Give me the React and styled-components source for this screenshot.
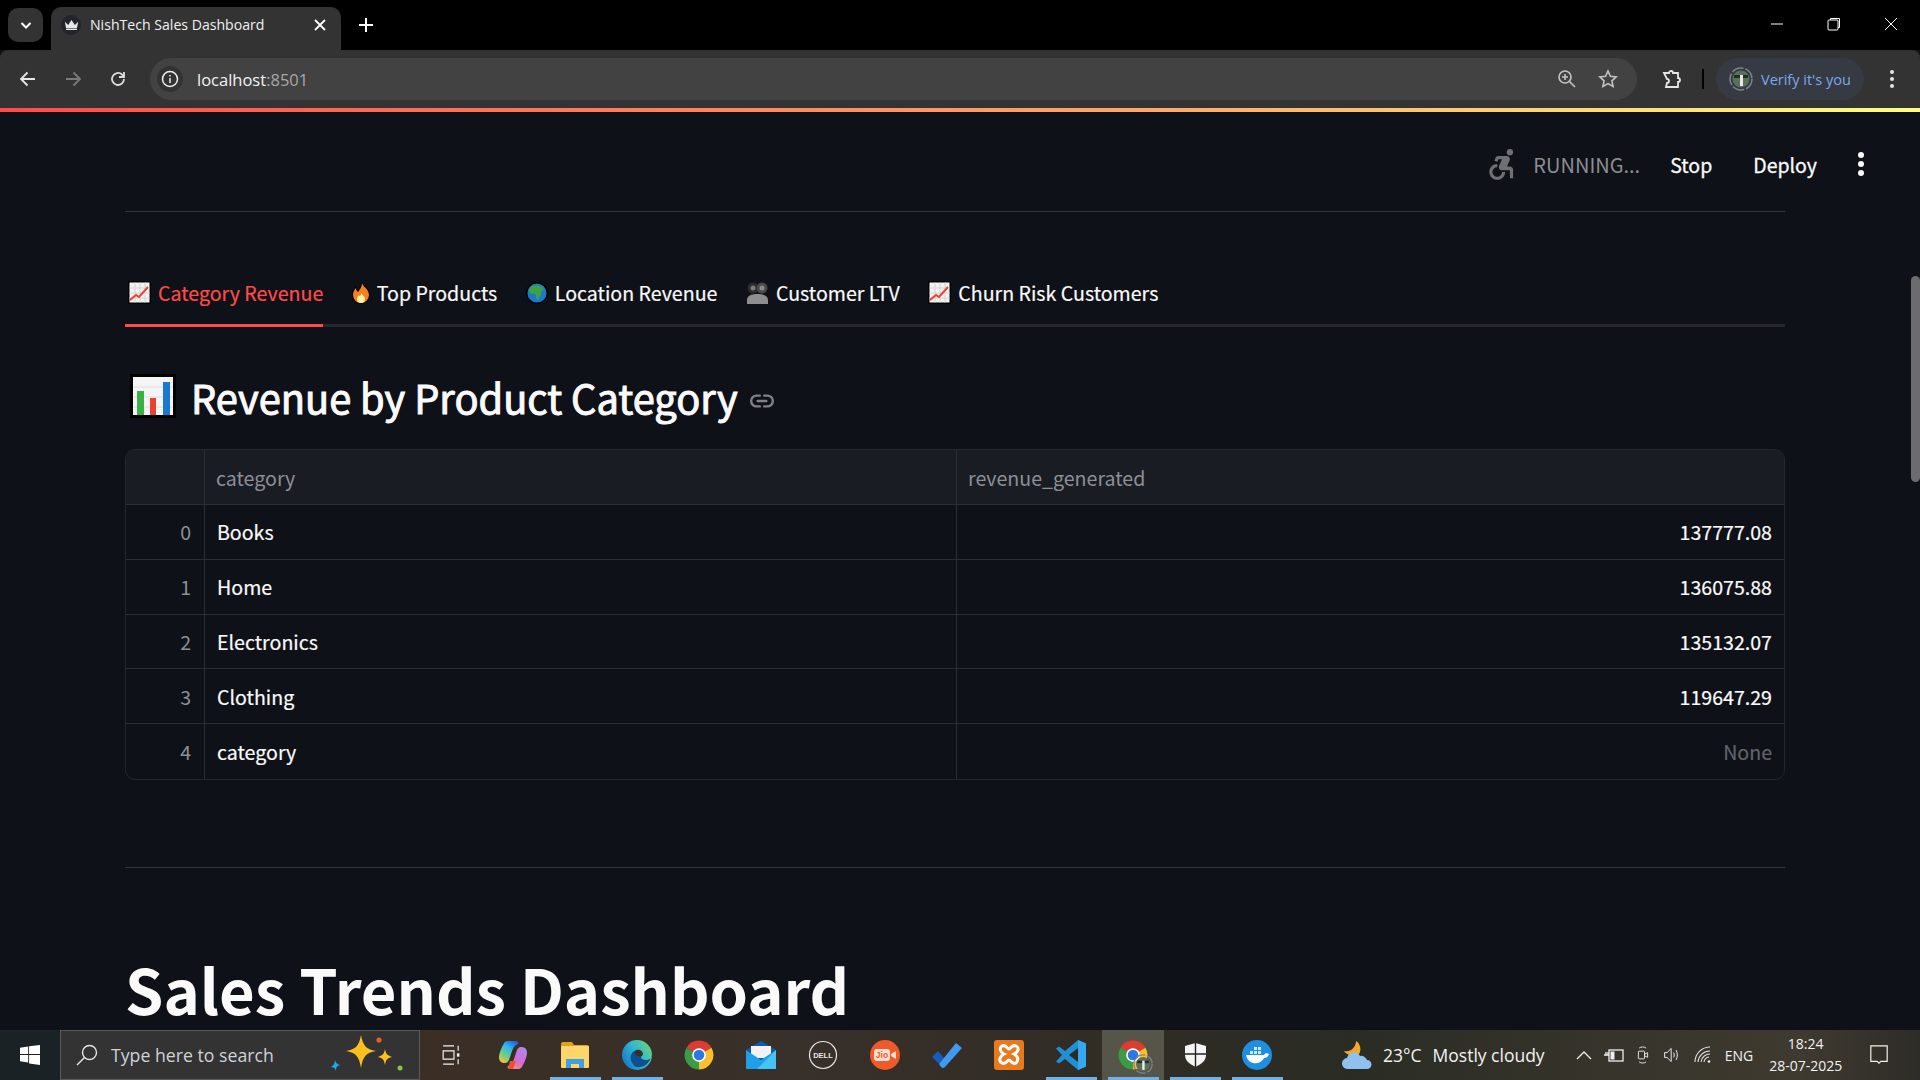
import React from 'react'
import styled, { createGlobalStyle } from 'styled-components'
import { MdAccessibleForward } from 'react-icons/md'

const SOURCE = `"Noto Sans CJK JP", "Noto Sans", sans-serif`
const SEGOE = `"Open Sans", "Noto Sans", sans-serif`

const GlobalStyle = createGlobalStyle`
  html, body { margin: 0; padding: 0; background: #0e1117; }
  * { box-sizing: border-box; }
`

const rows = [
  { id: 0, category: 'Books', revenue: '137777.08' },
  { id: 1, category: 'Home', revenue: '136075.88' },
  { id: 2, category: 'Electronics', revenue: '135132.07' },
  { id: 3, category: 'Clothing', revenue: '119647.29' },
  { id: 4, category: 'category', revenue: 'None', muted: true },
]

const ChartUp = () => (
  <svg width="23" height="23" viewBox="0 0 23 23">
    <rect width="23" height="23" fill="#000" />
    <rect x="1.500" y="1.500" width="20" height="20" fill="#f2f2f2" />
    <path d="M1.500 7h20M1.500 12h20M1.500 17h20M7 1.500v20M12 1.500v20M17 1.500v20" stroke="#d4d4d4" strokeWidth="1" />
    <path d="M2 19l6-5 3 2 9-10" fill="none" stroke="#e8432e" strokeWidth="2" />
  </svg>
)

const Flame = () => (
  <svg width="18" height="23" viewBox="0 0 18 23">
    <path d="M10 0c1 4 8 6 8 14a9 9 0 0 1-18 0c0-4 2-7 4-9 0 2 1 3 2 4 2-3 4-5 4-9z" fill="#000" />
    <path d="M10 2c1 4 7 6 7 12a8 8 0 0 1-16 0c0-3 1-5 3-7 0 2 1 3 2 4 2-3 4-5 4-9z" fill="#f6801f" />
    <path d="M9 12c1 2 4 3 4 6a4 4 0 0 1-8 0c0-2 1-3 2-4 0 1 1 1 1 1 1-1 1-2 1-3z" fill="#fdf0a0" />
  </svg>
)

const Globe = () => (
  <svg width="22" height="22" viewBox="0 0 22 22">
    <circle cx="11" cy="11" r="10.300" fill="#1a78d2" stroke="#000" strokeWidth="1.400" />
    <path d="M6 4c3-1 5-1 7 0 1 0 2 1 4 1l1 3c-2 0-3 1-3 3 0 3-2 4-3 7-1 0-2-1-2-3 0-2 0-3-2-3-3 0-5-1-5-3 0-3 2-4 3-5z" fill="#3fa144" />
  </svg>
)

const People = () => (
  <svg width="23" height="22" viewBox="0 0 23 22">
    <circle cx="7" cy="6" r="5.500" fill="#2c2c2c" />
    <circle cx="16" cy="6" r="5.500" fill="#4a4a4a" />
    <circle cx="7" cy="6" r="2.500" fill="#7c7c7c" />
    <circle cx="16" cy="6" r="2.500" fill="#8a8a8a" />
    <path d="M1 22v-4c0-4 4-6 10.500-6S22 14 22 18v4z" fill="#8e8e8e" />
  </svg>
)

const BarChart = () => (
  <svg width="46" height="44" viewBox="0 0 46 44">
    <rect width="46" height="44" fill="#000" />
    <rect x="3" y="3" width="40" height="38" fill="#f5f5f5" />
    <path d="M3 13h40M3 23h40M3 33h40" stroke="#dedede" strokeWidth="1" />
    <rect x="7" y="17" width="7" height="24" fill="#3cb043" />
    <rect x="20" y="24" width="6" height="17" fill="#e8432e" />
    <rect x="33" y="8" width="7" height="33" fill="#1a78d2" />
  </svg>
)

const LinkIcon = () => (
  <svg width="26" height="26" viewBox="0 0 24 24" fill="none" stroke="#7f8186" strokeWidth="2.2" strokeLinecap="round">
    <path d="M10 7H7a5 5 0 0 0 0 10h3M14 7h3a5 5 0 0 1 0 10h-3M8 12h8" />
  </svg>
)

const Crown = () => (
  <svg width="15" height="12" viewBox="0 0 18 14">
    <path d="M1 3l4 4 4-6 4 6 4-4-1.500 8h-13z" fill="#e8e8e8" />
    <rect x="2.500" y="11.500" width="13" height="1.500" fill="#e8e8e8" />
  </svg>
)

const Avatar = ({ size = 24 }) => (
  <svg width={size} height={size} viewBox="0 0 24 24">
    <circle cx="12" cy="12" r="11" fill="none" stroke="#80838a" strokeWidth="1.500" strokeDasharray="12 2" />
    <circle cx="12" cy="12" r="8.500" fill="#5d6e5c" />
    <path d="M5 8h14v3H5z" fill="#20301f" />
    <path d="M11 8h3v11h-3z" fill="#e8e8e8" />
  </svg>
)

const ChromeLogo = ({ size = 30 }) => (
  <svg width={size} height={size} viewBox="0 0 48 48">
    <path d="M24 24L4.080 12.500A23 23 0 0 1 43.920 12.500z" fill="#dd3c30" />
    <path d="M24 24L24 47A23 23 0 0 1 4.080 12.500z" fill="#3c9b47" />
    <path d="M24 24L43.920 12.500A23 23 0 0 1 24 47z" fill="#f7c02c" />
    <circle cx="24" cy="24" r="11" fill="#fff" />
    <circle cx="24" cy="24" r="8.500" fill="#2b78e4" />
  </svg>
)

const Copilot = () => (
  <svg width="30" height="30" viewBox="0 0 30 30">
    <defs>
      <linearGradient id="copA" x1="0.800" y1="0" x2="0.200" y2="1">
        <stop offset="0" stopColor="#1f62d8" />
        <stop offset="0.350" stopColor="#2fb5f0" />
        <stop offset="0.700" stopColor="#6fd080" />
        <stop offset="1" stopColor="#f5c242" />
      </linearGradient>
      <linearGradient id="copB" x1="0.800" y1="0" x2="0.200" y2="1">
        <stop offset="0" stopColor="#a98af0" />
        <stop offset="0.600" stopColor="#d86ad0" />
        <stop offset="1" stopColor="#f59a5a" />
      </linearGradient>
    </defs>
    <path d="M10 1h8c2 0 3 2 2 3-3 1-5 4-6 7l-3 9c-1 2-2 3-4 3-4 0-6-2-6-6s4-13 6-15c1-1 2-1 3-1z" fill="url(#copA)" />
    <path d="M20 29h-8c-2 0-3-2-2-3 3-1 5-4 6-7l3-9c1-2 2-3 4-3 4 0 6 2 6 6s-4 13-6 15c-1 1-2 1-3 1z" fill="url(#copB)" />
    <path d="M12 21h6l-3 8h-3c-2 0-2-2-1-4z" fill="#e8503a" />
  </svg>
)

const Explorer = () => (
  <svg width="28" height="26" viewBox="0 0 28 26">
    <path d="M0 2a2 2 0 0 1 2-2h9l2 3h13a2 2 0 0 1 2 2v3H0z" fill="#e0a11f" />
    <rect y="4" width="28" height="22" rx="1" fill="#fcd66a" />
    <path d="M5 26v-9h18v9h-5v-4h-8v4z" fill="#3f9fe0" />
  </svg>
)

const Edge = () => (
  <svg width="30" height="30" viewBox="0 0 30 30">
    <defs>
      <linearGradient id="edgeA" x1="0" y1="0.800" x2="1" y2="0.200">
        <stop offset="0" stopColor="#1673c4" />
        <stop offset="0.500" stopColor="#2fb4d6" />
        <stop offset="1" stopColor="#66d878" />
      </linearGradient>
    </defs>
    <circle cx="15" cy="15" r="15" fill="url(#edgeA)" />
    <path d="M30 15c0 3-3 5-6 5-3 0-5-1-5-3 1-1 1-3 0-4-2-3-7-3-9 0-3 4-1 11 4 14 7 1 13-2 16-12z" fill="#0f4f8f" />
    <path d="M14 10c4-1 7 1 7 4 0 2-3 3-5 2-3-1-5-4-2-6z" fill="#38302a" />
  </svg>
)

const Mail = () => (
  <svg width="30" height="28" viewBox="0 0 30 28">
    <path d="M0 9L15 0l15 9-15 10z" fill="#0b5cad" />
    <path d="M5 5h20v12H5z" fill="#f2f2f2" />
    <path d="M0 9l15 10L30 9v19H0z" fill="#1f9fe8" />
    <path d="M30 9v19H11z" fill="#43c4f5" />
  </svg>
)

const Dell = () => (
  <svg width="30" height="30" viewBox="0 0 30 30">
    <circle cx="15" cy="15" r="13.500" fill="none" stroke="#e6e6e6" strokeWidth="1.200" />
    <DellText x="15" y="18">DELL</DellText>
  </svg>
)

const Jio = () => (
  <svg width="30" height="30" viewBox="0 0 30 30">
    <circle cx="15" cy="15" r="15" fill="#f05a28" />
    <rect x="4" y="9" width="16" height="12" rx="3" fill="#fbe0d6" />
    <path d="M21 14l5-3v8l-5-3z" fill="#fbe0d6" />
    <JioText x="12" y="18">Jio</JioText>
  </svg>
)

const TodoCheck = () => (
  <svg width="30" height="26" viewBox="0 0 30 26">
    <path d="M0 15l6-6 6 7-5 6z" fill="#195abd" />
    <path d="M7 22L24 1l6 5-17 19a3 3 0 0 1-4 0z" fill="#3f9bef" />
  </svg>
)

const Xampp = () => (
  <svg width="30" height="30" viewBox="0 0 30 30">
    <rect width="30" height="30" rx="3" fill="#e87a1e" />
    <path d="M8 6c4-2 5 3 7 3s3-5 7-3 2 6-2 8c4 2 5 6 2 9-4 2-5-3-7-3s-3 5-7 3-2-7 2-9c-4-2-5-6-2-8z" fill="none" stroke="#fff" strokeWidth="3" />
  </svg>
)

const VsCode = () => (
  <svg width="30" height="30" viewBox="0 0 30 30">
    <path d="M22 0l8 3.500v23L22 30 9 19l-6 4.500-3-2 6-6.500-6-6.500 3-2L9 11z" fill="#1f8fd6" />
    <path d="M22 8l-9 7 9 7z" fill="#2b2a24" />
    <path d="M22 0l8 3.500v23L22 30z" fill="#35a8ee" />
  </svg>
)

const Shield = () => (
  <svg width="21" height="24" viewBox="0 0 21 24">
    <path d="M10.500 0L21 3v9c0 6-5 9-10.500 12C5 21 0 18 0 12V3z" fill="#f5f5f5" />
    <path d="M10.500 0v24M0 11h21" stroke="#222" strokeWidth="1.400" />
  </svg>
)

const Docker = () => (
  <svg width="30" height="30" viewBox="0 0 30 30">
    <circle cx="15" cy="15" r="15" fill="#1d8fe3" />
    <path d="M4 15h18c1-2 3-2 5-1-1 3-3 4-5 4-2 4-6 6-11 5-4-1-6-4-7-8z" fill="#fff" />
    <path d="M8 11h3v3H8zM12 11h3v3h-3zM16 11h3v3h-3zM12 7h3v3h-3zM16 7h3v3h-3z" fill="#cfe8fb" />
  </svg>
)

const Sparkles = () => (
  <svg width="78" height="42" viewBox="0 0 78 42">
    <path d="M32 1c2 11 5 14 15 16-10 2-13 5-15 17-2-12-5-15-15-17 10-2 13-5 15-16z" fill="#fbbf1f" />
    <path d="M56 15c1 5 2 6 7 8-5 1-6 3-7 8-1-5-2-7-7-8 5-2 6-3 7-8z" fill="#fbbf1f" />
    <circle cx="50" cy="6" r="2.600" fill="#e8601e" />
    <circle cx="71" cy="34" r="2.500" fill="#8cc63f" />
    <path d="M6 26c1 3 2 4 5 5-3 1-4 2-4 6-1-3-2-4-5-4 3-2 4-4 4-7z" fill="#1ea7ef" />
  </svg>
)

const WeatherIcon = () => (
  <svg width="30" height="28" viewBox="0 0 30 28">
    <path d="M14 0a10 10 0 0 1-12 10c2 4 10 6 15 3 3-4 1-11-3-13z" fill="#f3a82a" />
    <path d="M6 28a5.500 5.500 0 0 1-1-11 7 7 0 0 1 13-2 6 6 0 0 1 7 4 4.500 4.500 0 0 1 0 9z" fill="#8fc0ee" />
  </svg>
)

const ActiveChrome = () => (
  <ChromeStack>
    <ChromeLogo />
    <Badge><Avatar size={20} /></Badge>
  </ChromeStack>
)

const taskApps = [
  { name: 'copilot', Icon: Copilot },
  { name: 'explorer', Icon: Explorer, open: true },
  { name: 'edge', Icon: Edge, open: true },
  { name: 'chrome', Icon: ChromeLogo },
  { name: 'mail', Icon: Mail },
  { name: 'dell', Icon: Dell },
  { name: 'jio', Icon: Jio },
  { name: 'todo', Icon: TodoCheck },
  { name: 'xampp', Icon: Xampp },
  { name: 'vscode', Icon: VsCode, open: true },
  { name: 'chrome-active', Icon: ActiveChrome, open: true, active: true },
  { name: 'shield', Icon: Shield, open: true },
  { name: 'docker', Icon: Docker, open: true },
]

export default function App() {
  return (
    <Page>
      <GlobalStyle />

      <TabStrip>
        <TabSearch>
          <svg width="14" height="14" viewBox="0 0 14 14" fill="none" stroke="#fff" strokeWidth="2"><path d="M2.500 5L7 9.500 11.500 5" /></svg>
        </TabSearch>
        <BrowserTab>
          <Favicon><Crown /></Favicon>
          <TabTitle>NishTech Sales Dashboard</TabTitle>
          <svg width="14" height="14" viewBox="0 0 14 14" stroke="#fff" strokeWidth="1.800"><path d="M2 2l10 10M12 2L2 12" /></svg>
        </BrowserTab>
        <NewTab>
          <svg width="16" height="16" viewBox="0 0 16 16" stroke="#fff" strokeWidth="2"><path d="M8 1v14M1 8h14" /></svg>
        </NewTab>
        <WindowControls>
          <WindowButton>
            <svg width="14" height="14" viewBox="0 0 14 14" stroke="#fff" strokeWidth="1"><path d="M1 7h12" /></svg>
          </WindowButton>
          <WindowButton>
            <svg width="14" height="14" viewBox="0 0 14 14" fill="none" stroke="#fff" strokeWidth="1"><rect x="1" y="3" width="10" height="10" rx="1" /><path d="M3.500 3V1.500h9v9H11" /></svg>
          </WindowButton>
          <WindowButton>
            <svg width="14" height="14" viewBox="0 0 14 14" stroke="#fff" strokeWidth="1"><path d="M1 1l12 12M13 1L1 13" /></svg>
          </WindowButton>
        </WindowControls>
      </TabStrip>

      <Toolbar>
        <NavIcon>
          <svg width="18" height="18" viewBox="0 0 18 18" fill="none" stroke="#e6e6e6" strokeWidth="1.800"><path d="M16 9H2M8.500 2.500L2 9l6.500 6.500" /></svg>
        </NavIcon>
        <NavIcon>
          <svg width="18" height="18" viewBox="0 0 18 18" fill="none" stroke="#7a7a7a" strokeWidth="1.800"><path d="M2 9h14M9.500 2.500L16 9l-6.500 6.500" /></svg>
        </NavIcon>
        <NavIcon>
          <svg width="18" height="18" viewBox="0 0 18 18" fill="none" stroke="#dcdcdc" strokeWidth="1.800"><path d="M15 9a6 6 0 1 1-2-4.500L15 6.500" /><path d="M15 2v5h-5" /></svg>
        </NavIcon>
        <Omnibox>
          <SiteInfo>
            <svg width="18" height="18" viewBox="0 0 18 18" fill="none" stroke="#f0f0f0" strokeWidth="1.500"><circle cx="9" cy="9" r="7.500" /><path d="M9 8v5M9 5v1.500" /></svg>
          </SiteInfo>
          <UrlText>localhost<UrlPort>:8501</UrlPort></UrlText>
          <OmniActions>
            <svg width="20" height="20" viewBox="0 0 20 20" fill="none" stroke="#c4c4c4" strokeWidth="1.600"><circle cx="8" cy="8" r="6" /><path d="M12.500 12.500L18 18M5 8h6M8 5v6" /></svg>
            <svg width="20" height="20" viewBox="0 0 20 20" fill="none" stroke="#c4c4c4" strokeWidth="1.600"><path d="M10 2l2.400 5.300 5.800.6-4.300 3.900 1.200 5.700L10 14.600l-5.100 2.900 1.200-5.700L1.800 7.900l5.800-.6z" /></svg>
          </OmniActions>
        </Omnibox>
        <ExtensionSlot>
          <svg width="22" height="22" viewBox="0 0 22 22" fill="none" stroke="#e6e6e6" strokeWidth="1.800"><path d="M3 5h5a2 2 0 1 1 4 0h5v5a2 2 0 1 1 0 4v5H5l1-4a2 2 0 1 0 0-4z" /></svg>
        </ExtensionSlot>
        <ToolbarDivider />
        <VerifyPill>
          <Avatar />
          Verify it's you
        </VerifyPill>
        <MenuDots $size={4} $gap={3} $color="#e6e6e6" $left={26} />
      </Toolbar>

      <LoadBar />

      <Main>
        <StatusBar>
          <MdAccessibleForward size={38} color="#6e7074" />
          <RunningText>RUNNING...</RunningText>
          <StatusAction>Stop</StatusAction>
          <StatusAction>Deploy</StatusAction>
          <MenuDots $size={6} $gap={3} $color="#fafafa" $left={0} />
        </StatusBar>

        <Content>
          <Rule />
          <TabList>
            <AppTab $active><ChartUp />Category Revenue</AppTab>
            <AppTab><Flame />Top Products</AppTab>
            <AppTab><Globe />Location Revenue</AppTab>
            <AppTab><People />Customer LTV</AppTab>
            <AppTab><ChartUp />Churn Risk Customers</AppTab>
          </TabList>

          <SectionHeading>
            <BarChart />
            <HeadingText>Revenue by Product Category</HeadingText>
            <LinkIcon />
          </SectionHeading>

          <DataTable>
            <HeadCell />
            <HeadCell>category</HeadCell>
            <HeadCell $last>revenue_generated</HeadCell>
            {rows.map(row => (
              <React.Fragment key={row.id}>
                <IndexCell>{row.id}</IndexCell>
                <TextCell>{row.category}</TextCell>
                <ValueCell $muted={row.muted}>{row.revenue}</ValueCell>
              </React.Fragment>
            ))}
          </DataTable>

          <LowerRule />
          <PageTitle>Sales Trends Dashboard</PageTitle>
        </Content>

        <ScrollThumb />
      </Main>

      <Taskbar>
        <StartButton>
          <svg width="20" height="20" viewBox="0 0 22 22" fill="#fff"><path d="M0 3l9-1.300V10H0zM10 1.500L22 0v10H10zM0 11h9v8.300L0 18zM10 11h12v11l-12-1.700z" /></svg>
        </StartButton>
        <SearchBox>
          <svg width="24" height="24" viewBox="0 0 24 24" fill="none" stroke="#e6e6e6" strokeWidth="1.400"><circle cx="14.500" cy="9.500" r="7" /><path d="M9.500 14.500L2 22" /></svg>
          <SearchHint>Type here to search</SearchHint>
          <Sparkles />
        </SearchBox>
        <TaskView>
          <svg width="19" height="20" viewBox="0 0 22 24" fill="none" stroke="#f2f2f2" strokeWidth="1.400"><path d="M1 1h13M1 23h13M1 7h13v10H1zM19 1v6M19 17v6" /><rect x="17.500" y="10" width="3" height="4" fill="#f2f2f2" stroke="none" /></svg>
        </TaskView>
        {taskApps.map(({ name, Icon, open, active }) => (
          <TaskSlot key={name} $open={open} $active={active}><Icon /></TaskSlot>
        ))}
        <Tray>
          <WeatherIcon />
          <TrayLabel $left={11}>23°C</TrayLabel>
          <TrayLabel $left={11}>Mostly cloudy</TrayLabel>
          <TrayIcons>
            <svg width="16" height="10" viewBox="0 0 16 10" fill="none" stroke="#eee" strokeWidth="1.300"><path d="M1 9l7-7 7 7" /></svg>
            <svg width="20" height="14" viewBox="0 0 20 14" fill="none" stroke="#eee" strokeWidth="1.300"><rect x="5" y="2" width="14" height="11" /><rect x="6.500" y="3.500" width="4" height="8" fill="#eee" stroke="none" /><path d="M0 7h5M2 4v3M4 4v3" /></svg>
            <svg width="14" height="20" viewBox="0 0 14 26" fill="none" stroke="#eee" strokeWidth="1.200"><rect x="1" y="8" width="8" height="10" rx="1" /><path d="M9 12l4-2v6l-4-2M2 4c3-2 6-2 9 0M2 22c3 2 6 2 9 0" /></svg>
            <svg width="20" height="18" viewBox="0 0 20 22" fill="none" stroke="#eee" strokeWidth="1.200"><path d="M1 8h3l5-5v16l-5-5H1zM12 8c1 2 1 4 0 6M15 5c2 4 2 8 0 12" /></svg>
            <svg width="18" height="18" viewBox="0 0 18 18" fill="none" stroke="#ddd" strokeWidth="1.100"><path d="M1 16a15 15 0 0 1 15-15M4 16A12 12 0 0 1 16 5M7 16a9 9 0 0 1 9-8M10 16a6 6 0 0 1 5-5" /><circle cx="15" cy="15.500" r="1.300" fill="#eee" stroke="none" /></svg>
          </TrayIcons>
          <Lang>ENG</Lang>
          <Clock>
            <span>18:24</span>
            <span>28-07-2025</span>
          </Clock>
          <svg width="20" height="20" viewBox="0 0 20 22" fill="none" stroke="#f2f2f2" strokeWidth="1.300"><path d="M1 1h18v17h-7l-2 2-2-2H1z" /></svg>
        </Tray>
      </Taskbar>
    </Page>
  )
}

const Page = styled.div`
  width: 1920px;
  height: 1080px;
  display: flex;
  flex-direction: column;
  overflow: hidden;
  background: #0e1117;
`

const TabStrip = styled.div`
  height: 50px;
  flex: none;
  background: #000;
  display: flex;
  padding-left: 8px;
`

const TabSearch = styled.div`
  width: 35px;
  height: 34px;
  margin-top: 8px;
  border-radius: 10px;
  background: #333333;
  display: flex;
  align-items: center;
  justify-content: center;
`

const BrowserTab = styled.div`
  width: 290px;
  height: 43px;
  margin: 7px 0 0 8px;
  padding: 0 14px 8px 10px;
  background: #333333;
  border-radius: 10px 10px 0 0;
  display: flex;
  align-items: center;
`

const Favicon = styled.div`
  width: 20px;
  height: 20px;
  border-radius: 50%;
  background: #23252d;
  display: flex;
  align-items: center;
  justify-content: center;
`

const TabTitle = styled.div`
  flex: 1;
  margin-left: 9px;
  font: 400 14.1px ${SEGOE};
  color: #f0f0f0;
  white-space: nowrap;
`

const NewTab = styled.div`
  width: 36px;
  height: 34px;
  margin: 8px 0 0 7px;
  display: flex;
  align-items: center;
  justify-content: center;
`

const WindowControls = styled.div`
  margin-left: auto;
  display: flex;
  align-items: flex-start;
  padding-right: 1px;
`

const WindowButton = styled.div`
  width: 57px;
  height: 48px;
  display: flex;
  align-items: center;
  justify-content: center;
`

const Toolbar = styled.div`
  height: 58px;
  flex: none;
  background: #333333;
  border-radius: 8px 8px 0 0;
  display: flex;
  align-items: center;
  padding: 0 8px 0 5px;
`

const NavIcon = styled.div`
  width: 45px;
  display: flex;
  justify-content: center;
`

const Omnibox = styled.div`
  width: 1487px;
  height: 42px;
  margin-left: 10px;
  background: #424242;
  border-radius: 21px;
  display: flex;
  align-items: center;
  padding: 0 19px 0 7px;
`

const SiteInfo = styled.div`
  width: 26px;
  height: 26px;
  border-radius: 50%;
  background: #333333;
  display: flex;
  align-items: center;
  justify-content: center;
`

const UrlText = styled.div`
  margin-left: 14px;
  font: 400 16.5px ${SEGOE};
  color: #f2f2f2;
`

const UrlPort = styled.span`
  color: #a8a8a8;
`

const OmniActions = styled.div`
  margin-left: auto;
  display: flex;
  gap: 21px;
  align-items: center;
`

const ExtensionSlot = styled.div`
  width: 61px;
  display: flex;
  justify-content: center;
  margin-left: 4px;
`

const ToolbarDivider = styled.div`
  width: 2px;
  height: 20px;
  background: #000;
`

const VerifyPill = styled.div`
  width: 148px;
  height: 42px;
  margin-left: 12px;
  padding-left: 13px;
  border-radius: 21px;
  background: #363a43;
  color: #7ca9ec;
  font: 400 14.5px ${SEGOE};
  white-space: nowrap;
  display: flex;
  align-items: center;
  gap: 8px;
`

const MenuDots = styled.div`
  width: ${p => p.$size}px;
  height: ${p => p.$size}px;
  margin-left: ${p => p.$left}px;
  border-radius: 50%;
  background: ${p => p.$color};
  box-shadow: 0 ${p => p.$size + p.$gap}px 0 ${p => p.$color}, 0 -${p => p.$size + p.$gap}px 0 ${p => p.$color};
`

const LoadBar = styled.div`
  height: 4px;
  flex: none;
  background: linear-gradient(90deg, #ff4b4b, #ffa86a 60%, #fffd80);
`

const Main = styled.main`
  flex: 1;
  min-height: 0;
  position: relative;
  overflow: hidden;
`

const StatusBar = styled.div`
  height: 99px;
  display: flex;
  align-items: center;
  padding: 5px 56px 0 0;
  justify-content: flex-end;
  font-family: ${SOURCE};
`

const RunningText = styled.div`
  margin: 0 30px 0 12px;
  color: #8b8d92;
  font-size: 20px;
`

const StatusAction = styled.div`
  margin-right: 41px;
  color: #fafafa;
  font-size: 19.500px;
  -webkit-text-stroke: 0.3px #fafafa;
`

const Content = styled.div`
  padding: 0 135px 0 125px;
  font-family: ${SOURCE};
  color: #fafafa;
`

const Rule = styled.div`
  height: 1px;
  background: #35373d;
`

const TabList = styled.div`
  height: 115px;
  display: flex;
  align-items: flex-end;
  gap: 25.500px;
  border-bottom: 3px solid #26272e;
`

const AppTab = styled.div`
  height: 64px;
  margin-bottom: -3px;
  padding: 0 0 2px 3px;
  display: flex;
  align-items: center;
  gap: 7px;
  font-size: 19.600px;
  -webkit-text-stroke: 0.2px currentColor;
  color: ${p => (p.$active ? '#ff4b4b' : '#fafafa')};
  border-bottom: 3px solid ${p => (p.$active ? '#ff4b4b' : 'transparent')};
`

const SectionHeading = styled.h2`
  margin: 0;
  height: 122px;
  padding: 16px 0 0 5px;
  display: flex;
  align-items: center;
  font-size: 39.800px;
  font-weight: 400;
  -webkit-text-stroke: 1px #fafafa;
  & > svg:last-child { margin-top: 10px; }
`

const HeadingText = styled.span`
  margin: 0 11px 0 15px;
`

const DataTable = styled.div`
  display: grid;
  grid-template-columns: 79px 752px 1fr;
  grid-template-rows: 55px repeat(5, 54.800px);
  border: 1px solid #26272e;
  border-radius: 10px;
  overflow: hidden;
  font-size: 19.600px;
`

const cellBase = `
  display: flex;
  align-items: center;
  padding: 0 12px;
  border-bottom: 1px solid #2b2d34;
  border-right: 1px solid #2b2d34;
`

const HeadCell = styled.div`
  ${cellBase}
  padding-left: 11px;
  background: #1a1c24;
  color: #8c8f95;
  ${p => p.$last && 'border-right: 0;'}
`

const IndexCell = styled.div`
  ${cellBase}
  padding-right: 13px;
  justify-content: flex-end;
  color: #8c8f95;
  &:nth-last-child(3) { border-bottom: 0; }
`

const TextCell = styled.div`
  ${cellBase}
  -webkit-text-stroke: 0.2px #fafafa;
  &:nth-last-child(2) { border-bottom: 0; }
`

const ValueCell = styled.div`
  ${cellBase}
  border-right: 0;
  justify-content: flex-end;
  -webkit-text-stroke: 0.2px currentColor;
  color: ${p => (p.$muted ? '#62646b' : '#fafafa')};
  &:last-child { border-bottom: 0; }
`

const LowerRule = styled(Rule)`
  margin-top: 87px;
`

const PageTitle = styled.h1`
  margin: 90px 0 0;
  font-size: 61.500px;
  font-weight: 700;
  line-height: 1;
  white-space: nowrap;
`

const ScrollThumb = styled.div`
  position: absolute;
  top: 164px;
  right: 0;
  width: 9px;
  height: 206px;
  border-radius: 5px;
  background: #6a6c70;
`

const Taskbar = styled.footer`
  height: 50px;
  flex: none;
  display: flex;
  align-items: center;
  background: linear-gradient(90deg, #1b2225 0, #1b2225 60px, #3a2e25 420px, #38302a 800px, #2f2c24 1150px, #2a2c24 1350px, #3f3a30 1800px, #2e2c28);
  color: #f2f2f2;
  font-family: ${SEGOE};
`

const StartButton = styled.div`
  width: 60px;
  display: flex;
  justify-content: center;
`

const SearchBox = styled.div`
  width: 360px;
  height: 50px;
  padding: 0 12px 0 14px;
  background: #333333;
  border: 1px solid #5a5a5a;
  display: flex;
  align-items: center;
  gap: 12px;
`

const SearchHint = styled.div`
  flex: 1;
  font-size: 17.700px;
  color: #cfd2d6;
`

const TaskView = styled.div`
  width: 62px;
  display: flex;
  justify-content: center;
`

const TaskSlot = styled.div`
  position: relative;
  width: 62px;
  height: 50px;
  display: flex;
  align-items: center;
  justify-content: center;
  background: ${p => (p.$active ? '#565549' : 'transparent')};
  &::after {
    content: '';
    position: absolute;
    left: 6px;
    right: 5px;
    bottom: 0;
    height: 3px;
    background: ${p => (p.$open ? '#6fb2e8' : 'transparent')};
  }
`

const ChromeStack = styled.div`
  position: relative;
  display: flex;
`

const Badge = styled.div`
  position: absolute;
  right: -5px;
  bottom: -4px;
  display: flex;
`

const DellText = styled.text`
  font: 700 7.500px "Liberation Sans", sans-serif;
  fill: #e6e6e6;
  text-anchor: middle;
`

const JioText = styled.text`
  font: 700 8.500px "Liberation Sans", sans-serif;
  fill: #f05a28;
  text-anchor: middle;
`

const Tray = styled.div`
  margin-left: 2px;
  flex: 1;
  padding: 0 24px 0 52px;
  display: flex;
  align-items: center;
`

const TrayLabel = styled.div`
  margin-left: ${p => p.$left}px;
  font-size: 17.500px;
  white-space: nowrap;
`

const TrayIcons = styled.div`
  margin-left: 31px;
  display: flex;
  align-items: center;
  gap: 12px;
`

const Lang = styled.div`
  margin-left: 13px;
  font-size: 14px;
`

const Clock = styled.div`
  margin: 0 27px 0 16px;
  display: flex;
  flex-direction: column;
  align-items: center;
  gap: 6px;
  font-size: 14px;
  line-height: 16px;
`
